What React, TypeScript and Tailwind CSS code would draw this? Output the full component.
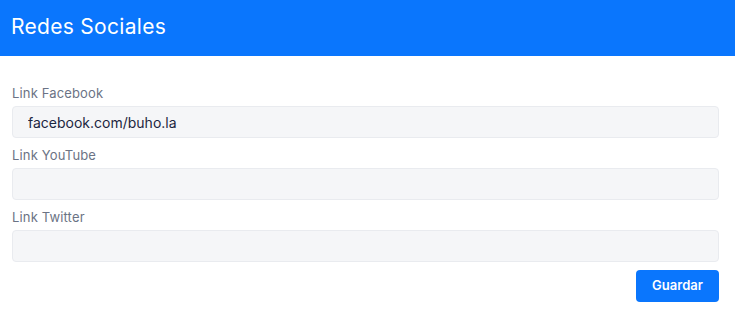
import React from "react";

const fields = [
  { label: "Link Facebook", value: "facebook.com/buho.la" },
  { label: "Link YouTube", value: "" },
  { label: "Link Twitter", value: "" },
];

export default function App() {
  return (
    <div className="w-[735px] h-[316px] bg-white" style={{ fontFamily: "Inter, 'Open Sans', sans-serif" }}>
      <div className="h-[56px] bg-[#0a76fd] flex items-center px-[11px] pb-[2px]">
        <h1 className="text-white text-[21px] font-normal tracking-[0.3px]">Redes Sociales</h1>
      </div>
      <div className="pl-3 pr-4 pt-[28px] flex flex-col">
        {fields.map((f) => (
          <div key={f.label} className="flex flex-col mb-2">
            <label className="text-[13px] leading-[18px] text-[#6b7385] mb-1 tracking-[0.15px]">{f.label}</label>
            <input
              readOnly
              value={f.value}
              className="h-[32px] w-full bg-[#f5f6f8] border border-[#e9ebef] rounded-[4px] px-[15px] text-[14px] text-[#1c2640] outline-none"
            />
          </div>
        ))}
        <div className="flex justify-end">
          <button className="h-[32px] w-[83px] bg-[#0a76fd] text-white text-[13px] font-semibold rounded-[4px]">
            Guardar
          </button>
        </div>
      </div>
    </div>
  );
}
